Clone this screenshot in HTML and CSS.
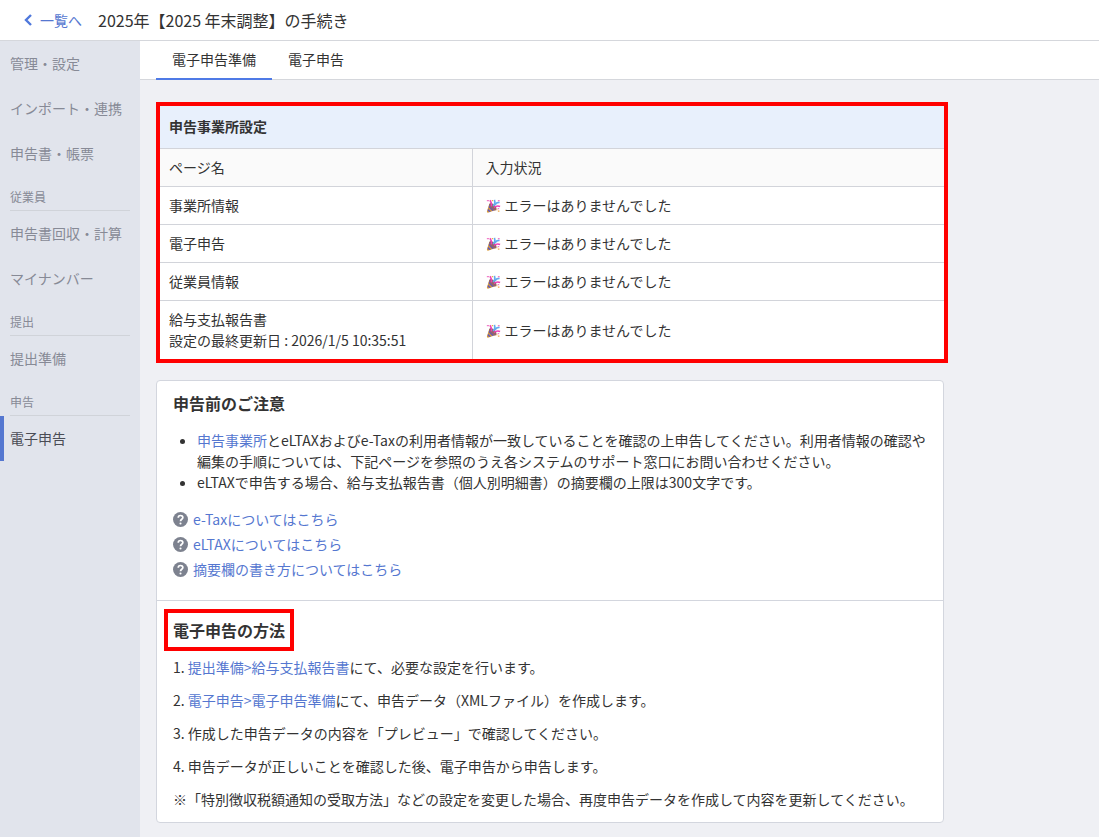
FILE: index.html
```html
<!DOCTYPE html>
<html lang="ja">
<head>
    <meta charset="UTF-8">
    <meta name="viewport" content="width=device-width, initial-scale=1.0">
    <title>電子申告準備</title>
    <link rel="stylesheet" href="styles.css">
</head>
<body>
    <svg class="sprite" aria-hidden="true">
        <symbol id="icon-party" viewBox="0 0 16 16">
            <path d="M3.2 5.5 L10.5 12.6 L1.6 15.6 Q.2 15.6 .6 14 Z" fill="#d99a35"/>
            <path d="M3.2 6.6 L9.4 12.6 L6.6 13.6 L2.4 9.4 Z M1.8 11 L5 14.2 L3 14.9 L1.2 13.2 Z" fill="#6458b8"/>
            <ellipse cx="7.2" cy="8.8" rx="2.6" ry="5.2" transform="rotate(-45 7.2 8.8)" fill="#94646a"/>
            <path d="M5.6 8.5 Q6.4 5 4 1.5 M8.5 9.5 Q12 7 15.5 8.5" fill="none" stroke="#ee3fb8" stroke-width="1.8"/>
            <path d="M7.5 7.8 Q10.5 5.5 9 1 M9.5 7 Q11.5 3.5 15 4" fill="none" stroke="#62abee" stroke-width="1.9"/>
            <path d="M.4 1.2h2.4v1.4H.4z M13 1h2v1.7h-2z M12.7 10.4h1.8v1.3h-1.8z" fill="#f07cc8"/>
            <path d="M6 1h1.5v1.5H6z M13 13h1.8v1.5H13z M11 11.6h1.4v1.2H11z" fill="#f0a848"/>
        </symbol>
        <symbol id="icon-help" viewBox="0 0 14 14">
            <circle cx="7" cy="7" r="7" fill="#7d828f"/>
            <path d="M4.9 5.4 C4.9 2.6 9.2 2.6 9.2 5.2 C9.2 6.8 7 6.8 7 8.6" fill="none" stroke="#fff" stroke-width="1.6"/>
            <circle cx="7" cy="10.7" r="1" fill="#fff"/>
        </symbol>
    </svg>

    <header class="header">
        <a class="back" href="#">
            <svg class="back-icon" viewBox="0 0 8 12" aria-hidden="true"><path d="M7 1 L2 6 L7 11" fill="none" stroke="#4f78dc" stroke-width="2.4"/></svg>
            一覧へ
        </a>
        <h1>2025年【2025 年末調整】の手続き</h1>
    </header>

    <div class="layout">
        <nav class="sidebar">
            <a class="side-link" href="#">管理・設定</a>
            <a class="side-link" href="#">インポート・連携</a>
            <a class="side-link" href="#">申告書・帳票</a>
            <div class="side-label">従業員</div>
            <a class="side-link" href="#">申告書回収・計算</a>
            <a class="side-link" href="#">マイナンバー</a>
            <div class="side-label">提出</div>
            <a class="side-link" href="#">提出準備</a>
            <div class="side-label">申告</div>
            <a class="side-link active" href="#">電子申告</a>
        </nav>

        <div class="main">
            <nav class="tabs">
                <a class="tab active" href="#">電子申告準備</a>
                <a class="tab" href="#">電子申告</a>
            </nav>

            <main class="content">
                <section class="status">
                    <table>
                        <caption>申告事業所設定</caption>
                        <thead>
                            <tr><th class="col-name">ページ名</th><th>入力状況</th></tr>
                        </thead>
                        <tbody>
                            <tr>
                                <td>事業所情報</td>
                                <td><svg class="party"><use href="#icon-party"/></svg>エラーはありませんでした</td>
                            </tr>
                            <tr>
                                <td>電子申告</td>
                                <td><svg class="party"><use href="#icon-party"/></svg>エラーはありませんでした</td>
                            </tr>
                            <tr>
                                <td>従業員情報</td>
                                <td><svg class="party"><use href="#icon-party"/></svg>エラーはありませんでした</td>
                            </tr>
                            <tr>
                                <td>給与支払報告書<br>設定の最終更新日 : 2026/1/5 10:35:51</td>
                                <td><svg class="party"><use href="#icon-party"/></svg>エラーはありませんでした</td>
                            </tr>
                        </tbody>
                    </table>
                </section>

                <div class="card">
                    <section class="notice">
                        <h2>申告前のご注意</h2>
                        <ul class="notes">
                            <li><a href="#">申告事業所</a>とeLTAXおよびe-Taxの利用者情報が一致していることを確認の上申告してください。利用者情報の確認や編集の手順については、下記ページを参照のうえ各システムのサポート窓口にお問い合わせください。</li>
                            <li>eLTAXで申告する場合、給与支払報告書（個人別明細書）の摘要欄の上限は300文字です。</li>
                        </ul>
                        <div class="help-links">
                            <a href="#"><svg class="help"><use href="#icon-help"/></svg>e-Taxについてはこちら</a>
                            <a href="#"><svg class="help"><use href="#icon-help"/></svg>eLTAXについてはこちら</a>
                            <a href="#"><svg class="help"><use href="#icon-help"/></svg>摘要欄の書き方についてはこちら</a>
                        </div>
                    </section>
                    <section class="method">
                        <h2 class="marked">電子申告の方法</h2>
                        <p>1. <a href="#">提出準備&gt;給与支払報告書</a>にて、必要な設定を行います。</p>
                        <p>2. <a href="#">電子申告&gt;電子申告準備</a>にて、申告データ（XMLファイル）を作成します。</p>
                        <p>3. 作成した申告データの内容を「プレビュー」で確認してください。</p>
                        <p>4. 申告データが正しいことを確認した後、電子申告から申告します。</p>
                        <p>※「特別徴収税額通知の受取方法」などの設定を変更した場合、再度申告データを作成して内容を更新してください。</p>
                    </section>
                </div>
            </main>
        </div>
    </div>
</body>
</html>
```

FILE: styles.css
```css
* {
    box-sizing: border-box;
}
body {
    margin: 0;
    min-height: 100vh;
    display: flex;
    flex-direction: column;
    font-family: "Noto Sans CJK JP", sans-serif;
    font-size: 14px;
    line-height: 21px;
    color: #333;
    background-color: #eff0f4;
}
a {
    color: #5577d0;
    text-decoration: none;
}
h1, h2, p, ul {
    margin: 0;
}
.sprite {
    display: none;
}

/* ヘッダー */
.header {
    display: flex;
    align-items: center;
    gap: 16px;
    padding: 8px 24px;
    background-color: #fff;
    border-bottom: 1px solid #d5d7dc;
}
.header h1 {
    font-size: 16px;
    line-height: 24px;
    font-weight: normal;
}
.back {
    display: flex;
    align-items: center;
    gap: 8px;
}
.back-icon {
    width: 8px;
    height: 12px;
}

.layout {
    flex: 1;
    display: flex;
}

/* サイドバー */
.sidebar {
    flex: 0 0 140px;
    background-color: #e1e4ec;
}
.side-link {
    display: block;
    padding: 12px 10px;
    color: #878a96;
}
.side-link.active {
    padding-left: 6px;
    border-left: 4px solid #5577d0;
    color: #4a4c55;
}
.side-label {
    margin: 0 10px;
    padding: 12px 0 4px;
    font-size: 12px;
    line-height: 18px;
    color: #878a96;
    border-bottom: 1px solid #d0d3d9;
}

/* タブ */
.main {
    flex: 1;
    min-width: 0;
}
.tabs {
    display: flex;
    padding: 0 16px;
    background-color: #fff;
    border-bottom: 1px solid #d5d7dc;
}
.tab {
    padding: 8px 16px;
    margin-bottom: -1px;
    border-bottom: 2px solid transparent;
    color: #333;
}
.tab.active {
    border-color: #4f7ae6;
}

.content {
    max-width: 824px;
    padding: 22px 16px 14px;
}

/* 入力状況 */
.status {
    border: 4px solid #f00;
    margin-bottom: 17px;
}
table {
    width: 100%;
    border-collapse: collapse;
    background-color: #fff;
}
caption {
    padding: 10px 9px 11px;
    text-align: left;
    font-weight: bold;
    background-color: #e8f0fc;
}
th, td {
    padding: 8px 9px;
    text-align: left;
    font-weight: normal;
    border-top: 1px solid #d2d4da;
}
th {
    background-color: #fafafa;
}
th + th, td + td {
    padding-left: 13px;
    border-left: 1px solid #d2d4da;
}
.col-name {
    width: 312px;
}
.party {
    width: 15px;
    height: 14px;
    margin-right: 4px;
    vertical-align: -2px;
}

/* 注意・方法 */
.card {
    margin-right: 4px;
    background-color: #fff;
    border: 1px solid #d3d6de;
    border-radius: 4px;
}
.card h2 {
    width: fit-content;
    margin-bottom: 15px;
    font-size: 16px;
    line-height: 24px;
}
.notice {
    padding: 10px 12px 18px 16px;
    border-bottom: 1px solid #d3d6de;
}
.notes {
    padding-left: 24px;
}
.help-links {
    display: flex;
    flex-direction: column;
    align-items: flex-start;
    margin-top: 14px;
}
.help-links a {
    display: flex;
    align-items: center;
    gap: 5px;
    line-height: 25px;
}
.help {
    width: 15px;
    height: 15px;
}
.method {
    padding: 17px 16px 12px;
}
.method .marked {
    outline: 4px solid #f00;
    outline-offset: 5px;
}
.method p + p {
    margin-top: 12px;
}
```
